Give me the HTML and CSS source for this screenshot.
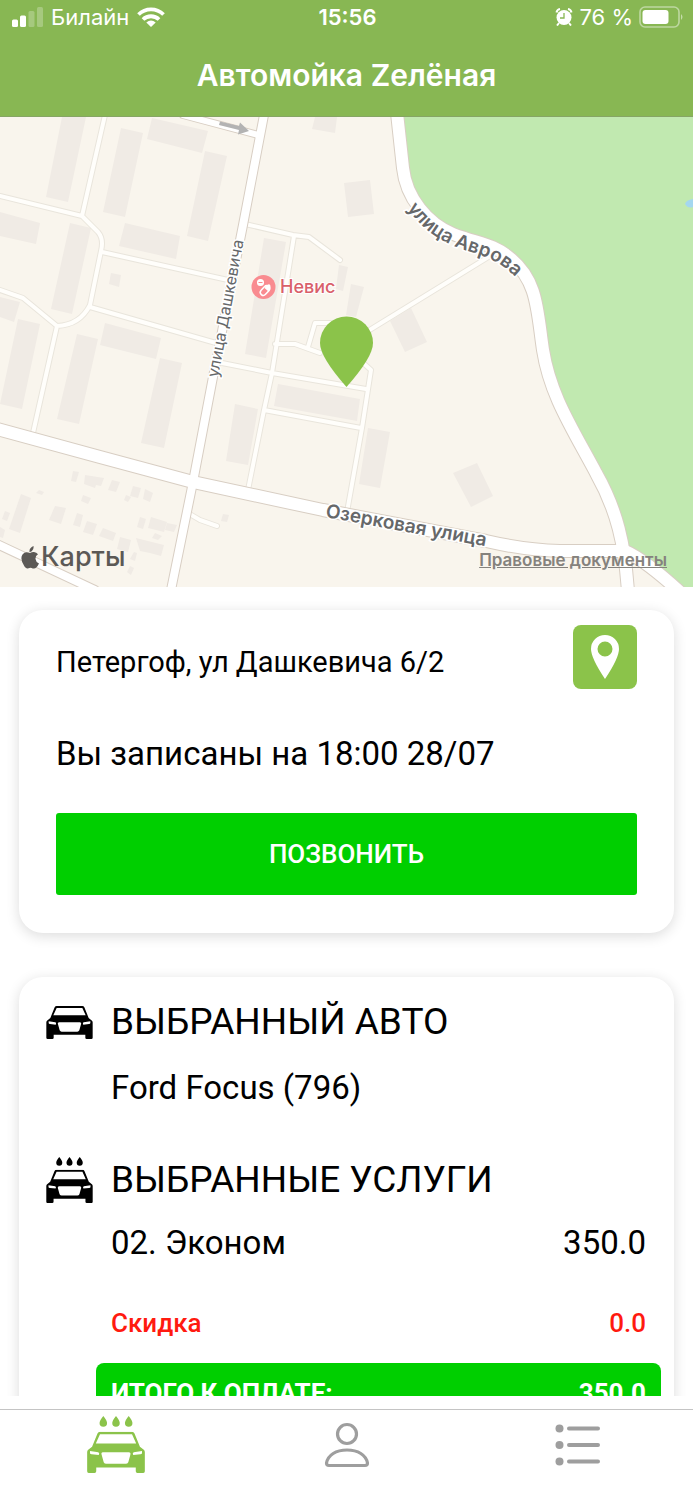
FILE: index.html
```html
<!DOCTYPE html>
<html lang="ru">
<head>
<meta charset="utf-8">
<meta name="viewport" content="width=device-width, initial-scale=1">
<title>Автомойка Zелёная</title>
<link rel="stylesheet" href="styles.css">
</head>
<body>
<svg class="sprite" aria-hidden="true">
  <symbol id="car" viewBox="139 135 139 99">
    <path fill-rule="evenodd" d="M139 184Q139 181 141 179L151 171L164 139Q166 135 170 135H247Q251 135 253 139L266 171L276 179Q278 181 278 184V230Q278 234 274 234H260Q256 234 256 230V221H161V230Q161 234 157 234H143Q139 234 139 230ZM160 163L170 141H247L257 163ZM146 181L166 184Q170 186 167 191L150 189Q146 189 146 186ZM271 181L251 184Q247 186 250 191L267 189Q271 189 271 186ZM177 184H240Q245 185 243 190L238 208Q236 212 232 212H185Q181 212 179 208L174 190Q172 185 177 184Z"/>
  </symbol>
  <symbol id="wash" viewBox="139 97 139 137">
    <use href="#car" x="139" y="135" width="139" height="99"/>
    <path d="M178 97Q187 108 187 114A9 9 0 0 1 169 114Q169 108 178 97ZM208.500 97Q217.500 108 217.500 114A9 9 0 0 1 199.500 114Q199.500 108 208.500 97ZM239 97Q248 108 248 114A9 9 0 0 1 230 114Q230 108 239 97Z"/>
  </symbol>
</svg>

<header class="header">
  <div class="status">
    <div class="status-side">
      <svg class="signal" viewBox="0 0 31 20" fill="#fff" aria-hidden="true">
        <rect y="12.500" width="6" height="7.500" rx="1.500"/><rect x="8" y="8.500" width="6" height="11.500" rx="1.500"/>
        <rect x="16.500" y="4" width="6" height="16" rx="1.500" opacity=".25"/><rect x="25" width="6" height="20" rx="1.500" opacity=".25"/>
      </svg>
      <span>Билайн</span>
      <svg class="wifi" viewBox="0 0 28 20" aria-hidden="true">
        <g fill="none" stroke="#fff" stroke-width="3.800"><path d="M1.500 7.500A18 18 0 0 1 26.500 7.500"/><path d="M6 12.500A11.500 11.500 0 0 1 22 12.500"/></g>
        <path fill="#fff" d="M14 20L9.300 15.500Q14 11.500 18.700 15.500Z"/>
      </svg>
    </div>
    <time class="clock">15:56</time>
    <div class="status-side status-end">
      <svg class="alarm" viewBox="0 0 18 18" aria-hidden="true">
        <circle cx="9" cy="9.500" r="7.500" fill="#fff"/>
        <path d="M1.500 4.500Q2 1.500 5 1M16.500 4.500Q16 1.500 13 1M4 15L2 17.500M14 15L16 17.500" stroke="#fff" stroke-width="2" fill="none"/>
        <path d="M9 5V10H5" stroke="#88b753" stroke-width="1.300" fill="none"/>
      </svg>
      <span>76 %</span>
      <svg class="battery" viewBox="0 0 44 22" aria-hidden="true">
        <rect x="1" y="1" width="39" height="20" rx="5" fill="none" stroke="#fff" stroke-width="1.600" opacity=".45"/>
        <rect x="3.500" y="4" width="26" height="14" rx="3" fill="#fff"/><path d="M42 8Q45 11 42 14Z" fill="#fff" opacity=".5"/>
      </svg>
    </div>
  </div>
  <h1 class="title">Автомойка Zелёная</h1>
</header>

<main class="content">
  <section class="map" aria-label="Карта">
    <svg class="map-canvas" viewBox="0 117 693 470" preserveAspectRatio="xMidYMid slice">
      <defs>
        <path id="dashkevicha" d="M218 378L245 234"/>
        <path id="avrova" d="M407 208C430 240 453 246 480 255C499 261 511 271 530 292"/>
        <path id="ozerkovaya" d="M325 517L500 549"/>
        <g id="minor">
          <path d="M105 115L82 216M0 196L82 216L98 232Q104 239 101 251L90 305Q80 325 57 326L33 433M0 290L23 298L57 326M102 252L228 280M90 307L216 343"/>
          <path d="M222 363L272 373L366 389M245 224L293 235L309 237L340 260M294 236L272 373L264 410L248 490M275 344H295L320 353M308 347L315 323H330M264 410L361 428M362 362L371 370L362 428L347 512M188 513L200 520L217 526M368 331L490 256"/>
        </g>
        <g id="major">
          <path d="M183 115L258 135" stroke-width="6"/>
          <path d="M264 115L243 225L213 377L193 482L171 590" stroke-width="8"/>
          <path d="M-3 544L95 590" stroke-width="8"/>
          <path d="M-3 429L100 457L193 482L323 510L486 541Q525 550 560 551H625Q645 560 680 592" stroke-width="12"/>
          <path d="M397 113L403 168C406 198 428 224 453 234C479 244 492 243 510 258C538 281 537 310 543 350C550 395 572 428 596 473C617 510 625 545 628 592" stroke-width="12"/>
        </g>
      </defs>
      <rect y="117" width="693" height="470" fill="#f9f5ed"/>
      <path fill="#c1e9b0" d="M397 113L403 168C406 198 428 224 453 234C479 244 492 243 510 258C538 281 537 310 543 350C550 395 572 428 596 473C612 502 620 530 626 550L684 592H700V113Z"/>
      <path fill="#a4d7ef" d="M693 199Q686 200 685 204Q688 209 693 207Z"/>
      <path fill="#f0ebe5" d="M62 117L86 117L68 202L46 197ZM121 128L143 133L125 217L103 212ZM152 118L208 131L202 153L147 139ZM205 151L227 156L208 241L187 236ZM125 223L180 236L176 259L119 246ZM0 212L40 223L36 244L0 236ZM70 223L91 228L72 314L51 309ZM111 273L121 275L119 287L109 284ZM0 297L20 302L14 322L0 317ZM18 319L40 324L22 409L0 404ZM77 334L98 339L79 424L57 419ZM105 323L161 338L156 359L100 345ZM160 358L182 363L164 448L141 443ZM264 238L286 242L266 358L245 354ZM315 117L337 117L335 133L312 129ZM344 183L370 180L374 214L348 217ZM339 265L348 267L343 291L336 289ZM351 284L364 287L356 317L346 315ZM390 321L411 308L427 342L405 352ZM235 404L258 409L248 465L226 461ZM278 384L360 399L357 421L274 406ZM368 428L390 432L380 488L359 484ZM453 473L477 463L493 496L471 507Z"/>
      <path fill="#f0ebe5" d="M73 471L79 472L76 482L71 481ZM85 475L104 478L101 486L96 485L95 488L84 484ZM112 480L120 482L116 492L108 490ZM133 486L141 488L138 498L130 496ZM145 489L153 493L150 502L143 499ZM83 495L91 498L88 504L81 501ZM126 495L131 497L128 502L124 500ZM39 490L44 492L42 495L36 493ZM21 494L31 498L20 533L9 529ZM55 506L66 508L61 524L49 520ZM77 513L83 515L80 527L73 525ZM87 521L97 524L93 535L83 532ZM103 528L116 533L113 541L99 536ZM120 537L131 540L128 552L117 549ZM140 517L146 519L143 529L137 527ZM151 517L167 522L164 532L148 528ZM167 523L177 525L174 532L165 530ZM136 538L164 545L161 556L150 553L140 551ZM134 552L137 553L135 561L130 559ZM130 566L134 568L131 575L127 572ZM223 514L229 515L227 522L221 521ZM155 533L162 536L158 540L152 538ZM5 511L10 513L7 521L2 519ZM0 527L5 530L3 538L0 537Z"/>
      <g fill="none" stroke-linecap="round" stroke-linejoin="round">
        <use href="#minor" stroke="#e9e5dc" stroke-width="6"/>
        <use href="#minor" stroke="#fffefb" stroke-width="4"/>
        <g stroke="#d8cec3">
          <path d="M183 115L258 135" stroke-width="8"/>
          <path d="M264 115L243 225L213 377L193 482L171 590" stroke-width="10"/>
          <path d="M-3 544L95 590" stroke-width="10"/>
          <path d="M-3 429L100 457L193 482L323 510L486 541Q525 550 560 551H625Q645 560 680 592" stroke-width="14"/>
          <path d="M397 113L403 168C406 198 428 224 453 234C479 244 492 243 510 258C538 281 537 310 543 350C550 395 572 428 596 473C617 510 625 545 628 592" stroke-width="14"/>
        </g>
        <use href="#major" stroke="#fff"/>
      </g>
      <path d="M220 121.500L239 126L240 122.500L249 131L238 134.500L239 130L219 125Z" fill="#b3b3b3"/>
      <g class="street">
        <text class="street-thin"><textPath href="#dashkevicha">улица Дашкевича</textPath></text>
        <text><textPath href="#avrova">улица Аврова</textPath></text>
        <text><textPath href="#ozerkovaya">Озерковая улица</textPath></text>
      </g>
      <circle cx="263.500" cy="287" r="12" fill="#f98b90"/>
      <g fill="none" stroke="#fff" stroke-width="1.500"><circle cx="260.500" cy="282.500" r="2.800" fill="#fff"/><rect x="262" y="285" width="6" height="11" rx="3" transform="rotate(42 265 290.500)"/><path d="M265 287.500L269 291"/><path stroke="#f98b90" stroke-width="1" d="M258.500 282.500H262.500"/></g>
      <path fill="#fff" d="M264.500 287L267 285Q270 283 270.500 286Q271 288 268.500 291Z"/>
      <text class="poi" x="280" y="293">Невис</text>
      <path d="M346.500 387Q320 357 320 343A26.500 26.500 0 0 1 373 343Q373 357 346.500 387Z" fill="#8bc34a"/>
    </svg>
    <div class="map-brand">
      <svg class="apple" viewBox="0 0 18 24" aria-hidden="true"><path fill="#5c5956" d="M12.500 1Q13 4 11 6Q10 7 8.500 7Q8 3 12.500 1ZM9 8Q11 6.800 13 7Q15.500 7.300 17 9.200Q14.200 11 14.500 14Q14.800 17 18 18.500Q15.500 23.500 13 23.500Q11.500 23.500 10.700 23Q9.300 22.400 7.500 23.200Q5.500 24.200 3.500 21.500Q-1.500 14 1.500 9.500Q4 6 9 8Z"/></svg>
      <span>Карты</span>
    </div>
    <a class="legal" href="#legal">Правовые документы</a>
  </section>

  <div class="cards">
    <section class="card booking">
      <div class="address-row">
        <p class="address">Петергоф, ул Дашкевича 6/2</p>
        <button class="locate" type="button" aria-label="Показать на карте">
          <svg viewBox="0 0 28 44" aria-hidden="true"><path fill="#fff" fill-rule="evenodd" d="M14 44Q0 23 0 14A14 14 0 0 1 28 14Q28 23 14 44ZM14 6.500A7.500 7.500 0 1 0 14 21.500A7.500 7.500 0 1 0 14 6.500Z"/></svg>
        </button>
      </div>
      <p class="when">Вы записаны на 18:00 28/07</p>
      <button class="call" type="button">ПОЗВОНИТЬ</button>
    </section>

    <section class="card order">
      <h2 class="heading"><svg class="icon-car" aria-hidden="true"><use href="#car"/></svg>ВЫБРАННЫЙ АВТО</h2>
      <p class="line">Ford Focus (796)</p>
      <h2 class="heading second"><svg class="icon-wash" aria-hidden="true"><use href="#wash"/></svg>ВЫБРАННЫЕ УСЛУГИ</h2>
      <p class="line"><span>02. Эконом</span><span>350.0</span></p>
      <p class="line discount"><span>Скидка</span><span>0.0</span></p>
      <p class="line total"><span>ИТОГО К ОПЛАТЕ:</span><span>350.0</span></p>
    </section>
  </div>
</main>

<nav class="tabs">
  <button class="tab active" type="button" aria-label="Мойка"><svg class="tab-wash"><use href="#wash"/></svg></button>
  <button class="tab" type="button" aria-label="Профиль">
    <svg class="tab-icon" viewBox="0 0 46 46" fill="none" stroke="#9e9e9e" stroke-width="3.200"><circle cx="23" cy="12" r="9.500"/><path stroke-linejoin="round" d="M5 43.500Q2.500 43.500 2.500 41C4 33 12 28 23 28S42 33 43.500 41Q43.500 43.500 41 43.500Z"/></svg>
  </button>
  <button class="tab" type="button" aria-label="Список">
    <svg class="tab-icon" viewBox="0 0 46 46" fill="#9e9e9e"><circle cx="4.500" cy="6.500" r="4"/><circle cx="4.500" cy="23" r="4"/><circle cx="4.500" cy="39.500" r="4"/><path fill="none" stroke="#9e9e9e" stroke-width="4" stroke-linecap="round" d="M14 6.500H43M14 23H43M14 39.500H43"/></svg>
  </button>
</nav>
</body>
</html>
```
FILE: styles.css
```css
* { box-sizing: border-box; }
body {
  margin: 0;
  height: 100vh;
  display: flex;
  flex-direction: column;
  background: #fff;
  color: #000;
  font-family: Roboto, "Liberation Sans", sans-serif;
}
h1, h2, p { margin: 0; font-weight: 400; }
button { border: 0; padding: 0; font: inherit; cursor: pointer; }
svg { display: block; flex: none; }
.sprite { position: absolute; width: 0; height: 0; }

.header {
  flex: none;
  background: #88b753;
  border-bottom: 1px solid #86a565;
  color: #fff;
  font-family: Inter, "Liberation Sans", sans-serif;
}
.status {
  display: grid;
  grid-template-columns: 1fr auto 1fr;
  align-items: center;
  height: 34px;
  padding: 0 10px 0 12px;
  font-size: 22px;
}
.status-side { display: flex; align-items: center; gap: 8px; }
.status-end { justify-content: flex-end; gap: 6px; }
.clock { font-weight: 600; }
.signal { width: 31px; height: 20px; }
.wifi { width: 28px; height: 20px; }
.alarm { width: 18px; height: 18px; }
.battery { width: 44px; height: 22px; }
.title {
  padding: 22px 0;
  font-size: 30px;
  line-height: 38px;
  font-weight: 600;
  text-align: center;
}

.content {
  flex: 1;
  min-height: 0;
  margin-bottom: 13px;
  overflow-y: auto;
  scrollbar-width: none;
}
.map {
  position: relative;
  aspect-ratio: 693 / 470;
  font-family: Inter, "Liberation Sans", sans-serif;
}
.map-canvas { width: 100%; height: 100%; }
.street {
  font-size: 19px;
  font-weight: 600;
  fill: #66686a;
  stroke: #fff;
  stroke-width: 3px;
  paint-order: stroke;
}
.street-thin { font-size: 16px; font-weight: 400; }
.poi {
  font-size: 18px;
  font-weight: 500;
  fill: #d9606a;
  stroke: #fff;
  stroke-width: 2px;
  paint-order: stroke;
}
.map-brand {
  position: absolute;
  left: 21px;
  bottom: 12px;
  display: flex;
  align-items: center;
  gap: 2px;
  color: #5c5956;
  font-size: 27px;
  line-height: 36px;
  font-weight: 500;
}
.apple { width: 18px; height: 24px; }
.legal {
  position: absolute;
  right: 26px;
  bottom: 16px;
  color: #85827d;
  font-size: 17px;
  line-height: 22px;
  font-weight: 600;
}

.cards {
  display: flex;
  flex-direction: column;
  gap: 44px;
  padding: 23px 19px;
}
.card {
  border-radius: 24px;
  background: #fff;
  box-shadow: 0 3px 14px rgba(0, 0, 0, .14);
}
.booking { padding: 15px 37px 38px; }
.address-row { display: flex; justify-content: space-between; align-items: flex-end; }
.address { font-size: 29px; line-height: 54px; }
.locate {
  display: grid;
  place-items: center;
  width: 64px;
  height: 64px;
  border-radius: 8px;
  background: #8bc34a;
}
.locate svg { width: 28px; height: 44px; }
.when { margin: 45px 0 39px; font-size: 33px; line-height: 40px; }
.call {
  width: 100%;
  height: 82px;
  border-radius: 3px;
  background: #00cf00;
  color: #fff;
  font-size: 26px;
  font-weight: 500;
}

.order { padding: 23px 13px 24px 27px; }
.heading {
  display: flex;
  align-items: center;
  gap: 18px;
  font-size: 37px;
  line-height: 44px;
}
.second { margin-top: 49px; }
.icon-car { width: 47px; height: 33px; }
.icon-wash { width: 47px; height: 46px; }
.line {
  display: flex;
  justify-content: space-between;
  margin: 24px 0 0 50px;
  padding: 0 15px;
  font-size: 33px;
  line-height: 40px;
}
.second + .line { margin-top: 20px; }
.discount {
  margin-top: 44px;
  color: #ff1a10;
  font-size: 26px;
  line-height: 32px;
  font-weight: 500;
}
.total {
  padding: 14px 15px;
  border-radius: 8px;
  background: #00cf00;
  color: #fff;
  font-size: 26px;
  line-height: 32px;
  font-weight: 700;
}

.tabs {
  flex: none;
  display: grid;
  grid-template-columns: repeat(3, 1fr);
  padding: 6px 0 27px;
  border-top: 1px solid #c4c4c4;
}
.tab { display: grid; place-items: center; height: 57px; background: none; }
.active { fill: #8bc34a; }
.tab-wash { width: 60px; height: 57px; }
.tab-icon { width: 46px; height: 46px; }
```
